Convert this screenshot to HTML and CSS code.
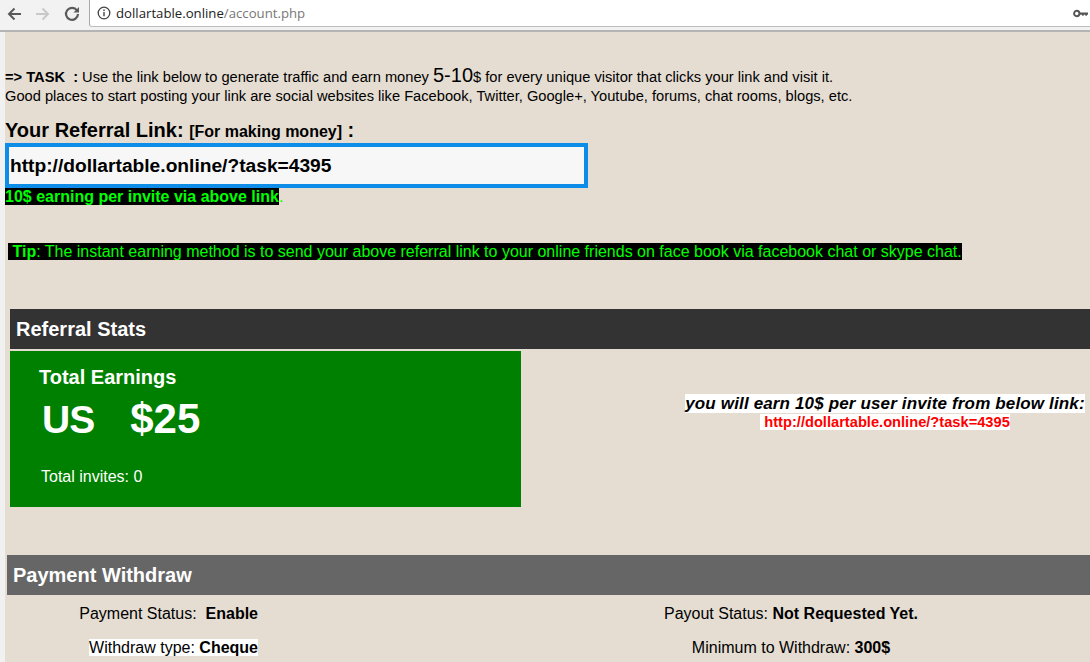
FILE: index.html
```html
<!DOCTYPE html>
<html lang="en">
<head>
  <meta charset="UTF-8" />
  <title>dollartable.online/account.php</title>
  <link rel="stylesheet" href="styles.css">
</head>
<body>
  <header class="browser-bar">
    <div class="nav-buttons">
      <svg class="nav-icon" viewBox="0 0 16 16"><path d="M15 8H3M8.500 2.500 3 8l5.500 5.500" fill="none" stroke="#5a5a5a" stroke-width="2"/></svg>
      <svg class="nav-icon" viewBox="0 0 16 16"><path d="M1 8h12M7.500 2.500 13 8l-5.500 5.500" fill="none" stroke="#c8c8c8" stroke-width="2"/></svg>
      <svg class="nav-icon" viewBox="0 0 16 16"><path d="M13 4.500A6 6 0 1 0 14 8" fill="none" stroke="#5a5a5a" stroke-width="2.200"/><path d="M9.500 6.500H15V1z" fill="#5a5a5a"/></svg>
    </div>
    <div class="address-box">
      <svg class="info-icon" viewBox="0 0 14 14"><circle cx="7" cy="7" r="5.800" fill="none" stroke="#444" stroke-width="1.300"/><path d="M7 6v4.200M7 3.500v1.400" stroke="#444" stroke-width="1.400"/></svg>
      <span class="url">dollartable.online<span class="url-path">/account.php</span></span>
      <svg class="key-icon" viewBox="0 0 14 8"><circle cx="3.500" cy="4" r="2.500" fill="none" stroke="#555" stroke-width="1.800"/><path d="M6 3h8v2.200h-1v1h-1.500v-1H10v1H8.500v-1H6z" fill="#555"/></svg>
    </div>
  </header>

  <main class="page">
    <section class="task">
      <p class="task-text"><b>=&gt; TASK &nbsp;:</b> Use the link below to generate traffic and earn money <span class="task-amount">5-10</span>$ for every unique visitor that clicks your link and visit it.<br>Good places to start posting your link are social websites like Facebook, Twitter, Google+, Youtube, forums, chat rooms, blogs, etc.</p>
      <h2 class="link-title">Your Referral Link: <small>[For making money]</small> :</h2>
      <input class="link-input" type="text" value="http://dollartable.online/?task=4395" readonly>
      <p class="per-invite"><b>10$ earning per invite via above link</b>.</p>
      <p class="tip"><span>&nbsp;<b>Tip</b>: The instant earning method is to send your above referral link to your online friends on face book via facebook chat or skype chat.</span></p>
    </section>

    <section class="stats">
      <h3 class="bar bar-dark">Referral Stats</h3>
      <div class="stats-row">
        <div class="earnings">
          <h4>Total Earnings</h4>
          <div class="amount"><span class="amount-us">US</span><span>$25</span></div>
          <p>Total invites: 0</p>
        </div>
        <div class="invite">
          <p class="invite-title"><span>you will earn 10$ per user invite from below link:</span></p>
          <p class="invite-link"><span>&nbsp;http://dollartable.online/?task=4395</span></p>
        </div>
      </div>
    </section>

    <section class="withdraw">
      <h3 class="bar bar-grey">Payment Withdraw</h3>
      <div class="withdraw-grid">
        <p class="col-left">Payment Status: &nbsp;<b>Enable</b></p>
        <p class="col-right">Payout Status: <b>Not Requested Yet.</b></p>
        <p class="col-left"><span class="white">Withdraw type: <b>Cheque</b></span></p>
        <p class="col-right">Minimum to Withdraw: <b>300$</b></p>
      </div>
    </section>
  </main>
</body>
</html>
```

FILE: styles.css
```css
html, body {
  margin: 0;
  padding: 0;
  height: 662px;
  overflow: hidden;
}

body {
  background: #f1f1f1;
  font-family: "Liberation Sans", Arial, sans-serif;
  font-size: 16px;
  color: #000;
}

p, h2, h3, h4 {
  margin: 0;
}

.browser-bar {
  display: flex;
  height: 30px;
  background: #f2f2f2;
  border-bottom: 2px solid #b4b4b4;
}

.nav-buttons {
  display: flex;
  align-items: flex-start;
  gap: 13px;
  width: 89px;
  padding: 6px 0 0 6px;
  box-sizing: border-box;
}

.nav-icon {
  width: 16px;
  height: 16px;
}

.address-box {
  flex: 1;
  display: flex;
  align-items: center;
  height: 26px;
  background: #fff;
  border-left: 1px solid #a9a9a9;
  border-bottom: 1px solid #bdbdbd;
  border-bottom-left-radius: 3px;
  padding-left: 7px;
}

.info-icon {
  width: 14px;
  height: 14px;
}

.url {
  margin-left: 5px;
  font-family: "Open Sans", sans-serif;
  font-size: 13.2px;
  color: #222;
  flex: 1;
}

.url-path {
  color: #777;
}

.key-icon {
  width: 15px;
  height: 9px;
  margin-right: 2px;
}

.page {
  margin-left: 5px;
  height: 630px;
  background: #e5ddd2;
  overflow: hidden;
}

.task {
  padding-top: 35px;
}

.task-text {
  font-size: 14.67px;
  line-height: 19px;
}

.task-amount {
  font-size: 20px;
  line-height: 16px;
}

.link-title {
  margin-top: 13px;
  font-size: 20px;
  line-height: 22px;
}

.link-title small {
  font-size: 16px;
}

.link-input {
  display: block;
  box-sizing: border-box;
  width: 583px;
  height: 45px;
  padding: 0 1px;
  border: 4px solid #0d8de8;
  background: #f7f7f7;
  font-family: "Liberation Sans", Arial, sans-serif;
  font-size: 19.2px;
  font-weight: bold;
  color: #000;
  outline: none;
}

.per-invite {
  color: #00ff00;
  line-height: 18px;
}

.per-invite b {
  background: #000;
}

.tip {
  margin-top: 37px;
  padding-left: 3px;
  color: #00ff00;
  line-height: 18px;
}

.tip span {
  background: #000;
}

.stats {
  margin: 48px 0 0 5px;
}

.bar {
  height: 40px;
  line-height: 40px;
  color: #fff;
  font-size: 20px;
}

.bar-dark {
  background: #333;
  padding-left: 6px;
}

.bar-grey {
  background: #666;
  padding-left: 6px;
}

.stats-row {
  display: flex;
  margin-top: 2px;
}

.earnings {
  box-sizing: border-box;
  width: 511px;
  height: 156px;
  padding: 15px 0 0 29px;
  background: #008000;
  color: #fff;
}

.earnings h4 {
  font-size: 20px;
  line-height: 23px;
}

.amount {
  display: flex;
  align-items: baseline;
  gap: 36px;
  margin: 7px 0 0 3px;
  font-size: 42px;
  font-weight: bold;
  line-height: 46px;
}

.amount-us {
  font-size: 39px;
  letter-spacing: -1px;
}

.earnings p {
  margin: 25px 0 0 2px;
  line-height: 18px;
}

.invite {
  flex: 1;
  padding: 43px 0 0 159px;
  text-align: center;
}

.invite-title {
  font-size: 17px;
  font-weight: bold;
  font-style: italic;
  letter-spacing: 0.15px;
  line-height: 19px;
}

.invite-title span,
.invite-link span,
.white {
  background: #fff;
}

.invite-link {
  color: #f00;
  font-size: 14.67px;
  font-weight: bold;
  line-height: 17px;
  margin-top: 1px;
}

.withdraw {
  margin: 48px 0 0 2px;
}

.withdraw-grid {
  display: grid;
  grid-template-columns: 251px 1fr;
  row-gap: 16px;
  padding-top: 10px;
  line-height: 18px;
}

.col-left {
  text-align: right;
}

.col-right {
  padding-left: 234px;
  text-align: center;
}
```
